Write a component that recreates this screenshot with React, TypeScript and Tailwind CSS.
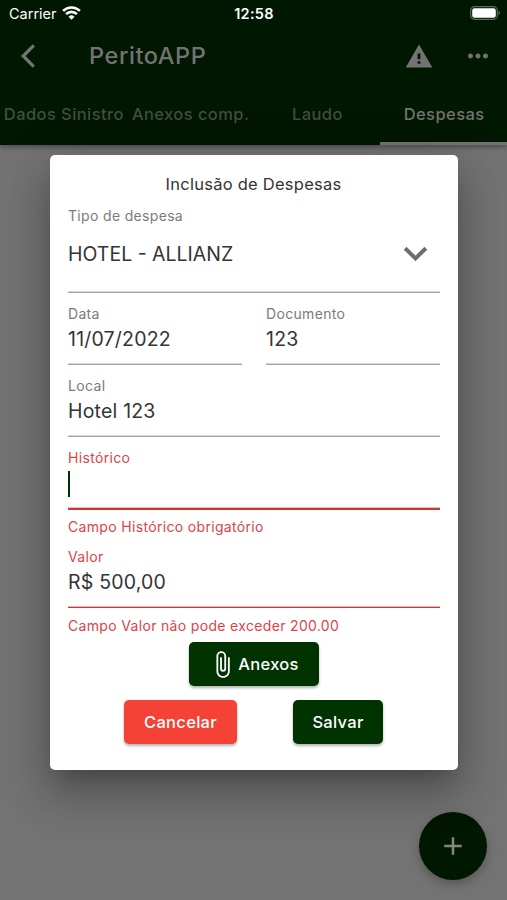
import { ReactNode } from "react";
import clsx from "clsx";
import { MdAdd, MdAttachFile, MdMoreHoriz } from "react-icons/md";

const tabs = [
  { label: "Dados Sinistro" },
  { label: "Anexos comp." },
  { label: "Laudo" },
  { label: "Despesas", active: true },
];

const StatusBar = () => (
  <div className="grid h-7 grid-cols-3 items-center pl-[9px] pr-[6px] text-white">
    <div className="flex items-center gap-[5px]">
      <span className="text-[14.5px] leading-5">Carrier</span>
      <svg className="-mt-[2px]" width="19" height="14" viewBox="0 0 19 14" fill="none" stroke="currentColor" strokeWidth="2.6">
        <path d="M1.1 4.9a12 12 0 0 1 16.8 0" />
        <path d="M4.1 8.1a7.7 7.7 0 0 1 10.8 0" />
        <path d="M9.5 13.8 6.5 10.7a4.3 4.3 0 0 1 6 0z" fill="currentColor" stroke="none" />
      </svg>
    </div>
    <span className="pr-[2px] text-center text-[14.5px] font-semibold leading-5 tracking-[0.3px]">12:58</span>
    <svg className="-mt-[2px] justify-self-end" width="31" height="14" viewBox="0 0 31 14">
      <rect x="0.7" y="0.7" width="26.6" height="12.6" rx="3.8" fill="none" stroke="#5d6b5d" strokeWidth="1.2" />
      <rect x="2.2" y="2.2" width="23.6" height="9.6" rx="2.2" fill="#fff" />
      <path d="M28.6 4.8c1.9.7 1.9 3.7 0 4.4z" fill="#5d6b5d" />
    </svg>
  </div>
);

const Header = () => (
  <header className="flex h-[145px] flex-col bg-[#001700] text-[#737373] shadow-[0_2px_5px_rgba(0,0,0,0.35)]">
    <StatusBar />
    <div className="flex h-14 items-center pl-[20px] pr-[14px]">
      <svg width="16" height="26" viewBox="0 0 16 26" fill="none" stroke="currentColor" strokeWidth="3.2">
        <path d="M13.8 2.3 3.2 13l10.6 10.7" />
      </svg>
      <h1 className="ml-[53px] flex-1 text-[23.5px] font-medium leading-7 tracking-[0.6px]">PeritoAPP</h1>
      <svg className="mr-[30px] -mt-[1px]" width="28" height="24" viewBox="0 0 28 24">
        <path d="M14 .5 27.3 23.4H.7z" fill="currentColor" />
        <path d="M12.6 9.6h2.8v5.6h-2.8zM12.6 17.2h2.8v2.6h-2.8z" fill="#001700" />
      </svg>
      <MdMoreHoriz className="size-[30px]" />
    </div>
    <nav className="grid flex-1 grid-cols-4">
      {tabs.map((tab) => (
        <div
          key={tab.label}
          className={clsx(
            "flex justify-center whitespace-nowrap border-b-[3px] pl-px pt-5 text-[16.5px] font-medium leading-5 tracking-[0.42px]",
            tab.active ? "border-[#737373]" : "border-transparent text-[#3f4f3f]"
          )}
        >
          {tab.label}
        </div>
      ))}
    </nav>
  </header>
);

const Line = ({ error, focused }: { error?: boolean; focused?: boolean }) => (
  <div
    className={clsx(
      focused ? "h-[2px]" : "h-px",
      error
        ? "bg-[#d03437] shadow-[0_-1px_0_rgba(208,52,55,0.35)]"
        : "bg-[#a3a3a3] shadow-[0_-1px_0_rgba(120,120,120,0.3)]"
    )}
  />
);

type FieldProps = {
  label: string;
  value?: string;
  error?: string;
  focused?: boolean;
  className?: string;
};

const Field = ({ label, value, error, focused, className }: FieldProps) => (
  <div className={className}>
    <div className={clsx("h-5 pl-[0.5px] text-[14px] leading-5 tracking-[0.33px]", error ? "text-[#d9454a]" : "text-[#7b7b7b]")}>
      {label}
    </div>
    <div className="mb-3 flex h-7 items-center text-[19.5px] leading-7 tracking-[0.2px]">
      {focused ? <span className="mt-[3px] h-[26px] w-[2px] bg-[#003300]" /> : <span className="pl-[0.5px] pt-px">{value}</span>}
    </div>
    <Line error={!!error} focused={focused} />
    {error && (
      <div className={clsx("h-5 pl-[0.5px] text-[14px] leading-5 tracking-[0.33px] text-[#d9454a]", focused ? "mt-[7px]" : "mt-2")}>
        {error}
      </div>
    )}
  </div>
);

const Button = ({ children, className }: { children: ReactNode; className: string }) => (
  <button
    className={clsx(
      "flex h-11 items-center justify-center rounded-[5px] text-[16.5px] font-medium leading-5 tracking-[0.3px] text-white shadow-[0_2px_3px_rgba(0,0,0,0.3)]",
      className
    )}
  >
    {children}
  </button>
);

const ExpenseDialog = () => (
  <div className="h-[615px] w-[408px] rounded-[5px] bg-white px-[18px] pt-[19px] text-[#343434] shadow-[0_14px_20px_-8px_rgba(0,0,0,0.22),0_28px_42px_3px_rgba(0,0,0,0.15),0_10px_50px_8px_rgba(0,0,0,0.13)]">
    <h2 className="h-5 text-center text-[16.5px] leading-5 tracking-[0.25px]">Inclusão de Despesas</h2>

    {/* Tipo de despesa */}
    <div className="mt-3 h-5 pl-[0.5px] text-[14px] leading-5 tracking-[0.33px] text-[#7b7b7b]">Tipo de despesa</div>
    <div className="mt-[2px] flex h-16 items-start justify-between">
      <span className="mt-3 pl-[0.5px] text-[19.5px] leading-7">HOTEL - ALLIANZ</span>
      <svg className="mr-3 mt-[18px] text-[#6e6e6e]" width="25" height="16" viewBox="0 0 25 16" fill="none" stroke="currentColor" strokeWidth="4">
        <path d="M2.1 2.2 12.5 12.4 22.9 2.2" />
      </svg>
    </div>
    <Line />

    <div className="mt-[11px] grid grid-cols-2 gap-6">
      <Field label="Data" value="11/07/2022" />
      <Field label="Documento" value="123" />
    </div>
    <Field className="mt-[11px]" label="Local" value="Hotel 123" />
    <Field className="mt-[11px]" label="Histórico" error="Campo Histórico obrigatório" focused />
    <Field className="mt-[10px]" label="Valor" value="R$ 500,00" error="Campo Valor não pode exceder 200.00" />

    {/* Botões */}
    <div className="mt-[6px] flex justify-center">
      <Button className="w-[130px] bg-[#003300]">
        <MdAttachFile className="mr-[1px] size-[29px]" />
        Anexos
      </Button>
    </div>
    <div className="mt-[14px] flex justify-center gap-14">
      <Button className="w-[113px] bg-[#f44336]">Cancelar</Button>
      <Button className="w-[90px] bg-[#003300]">Salvar</Button>
    </div>
  </div>
);

const App = () => (
  <div className="relative h-[900px] w-[507px] overflow-hidden bg-[#737373] font-['Inter',sans-serif]">
    <Header />
    <button className="absolute bottom-[20px] right-[20px] flex size-[68px] items-center justify-center rounded-full bg-[#001700] text-[#83887b] shadow-[0_4px_10px_rgba(0,0,0,0.25)]">
      <MdAdd className="size-[30px]" />
    </button>
    <div className="absolute inset-x-0 top-[155px] flex justify-center">
      <ExpenseDialog />
    </div>
  </div>
);

export default App;
